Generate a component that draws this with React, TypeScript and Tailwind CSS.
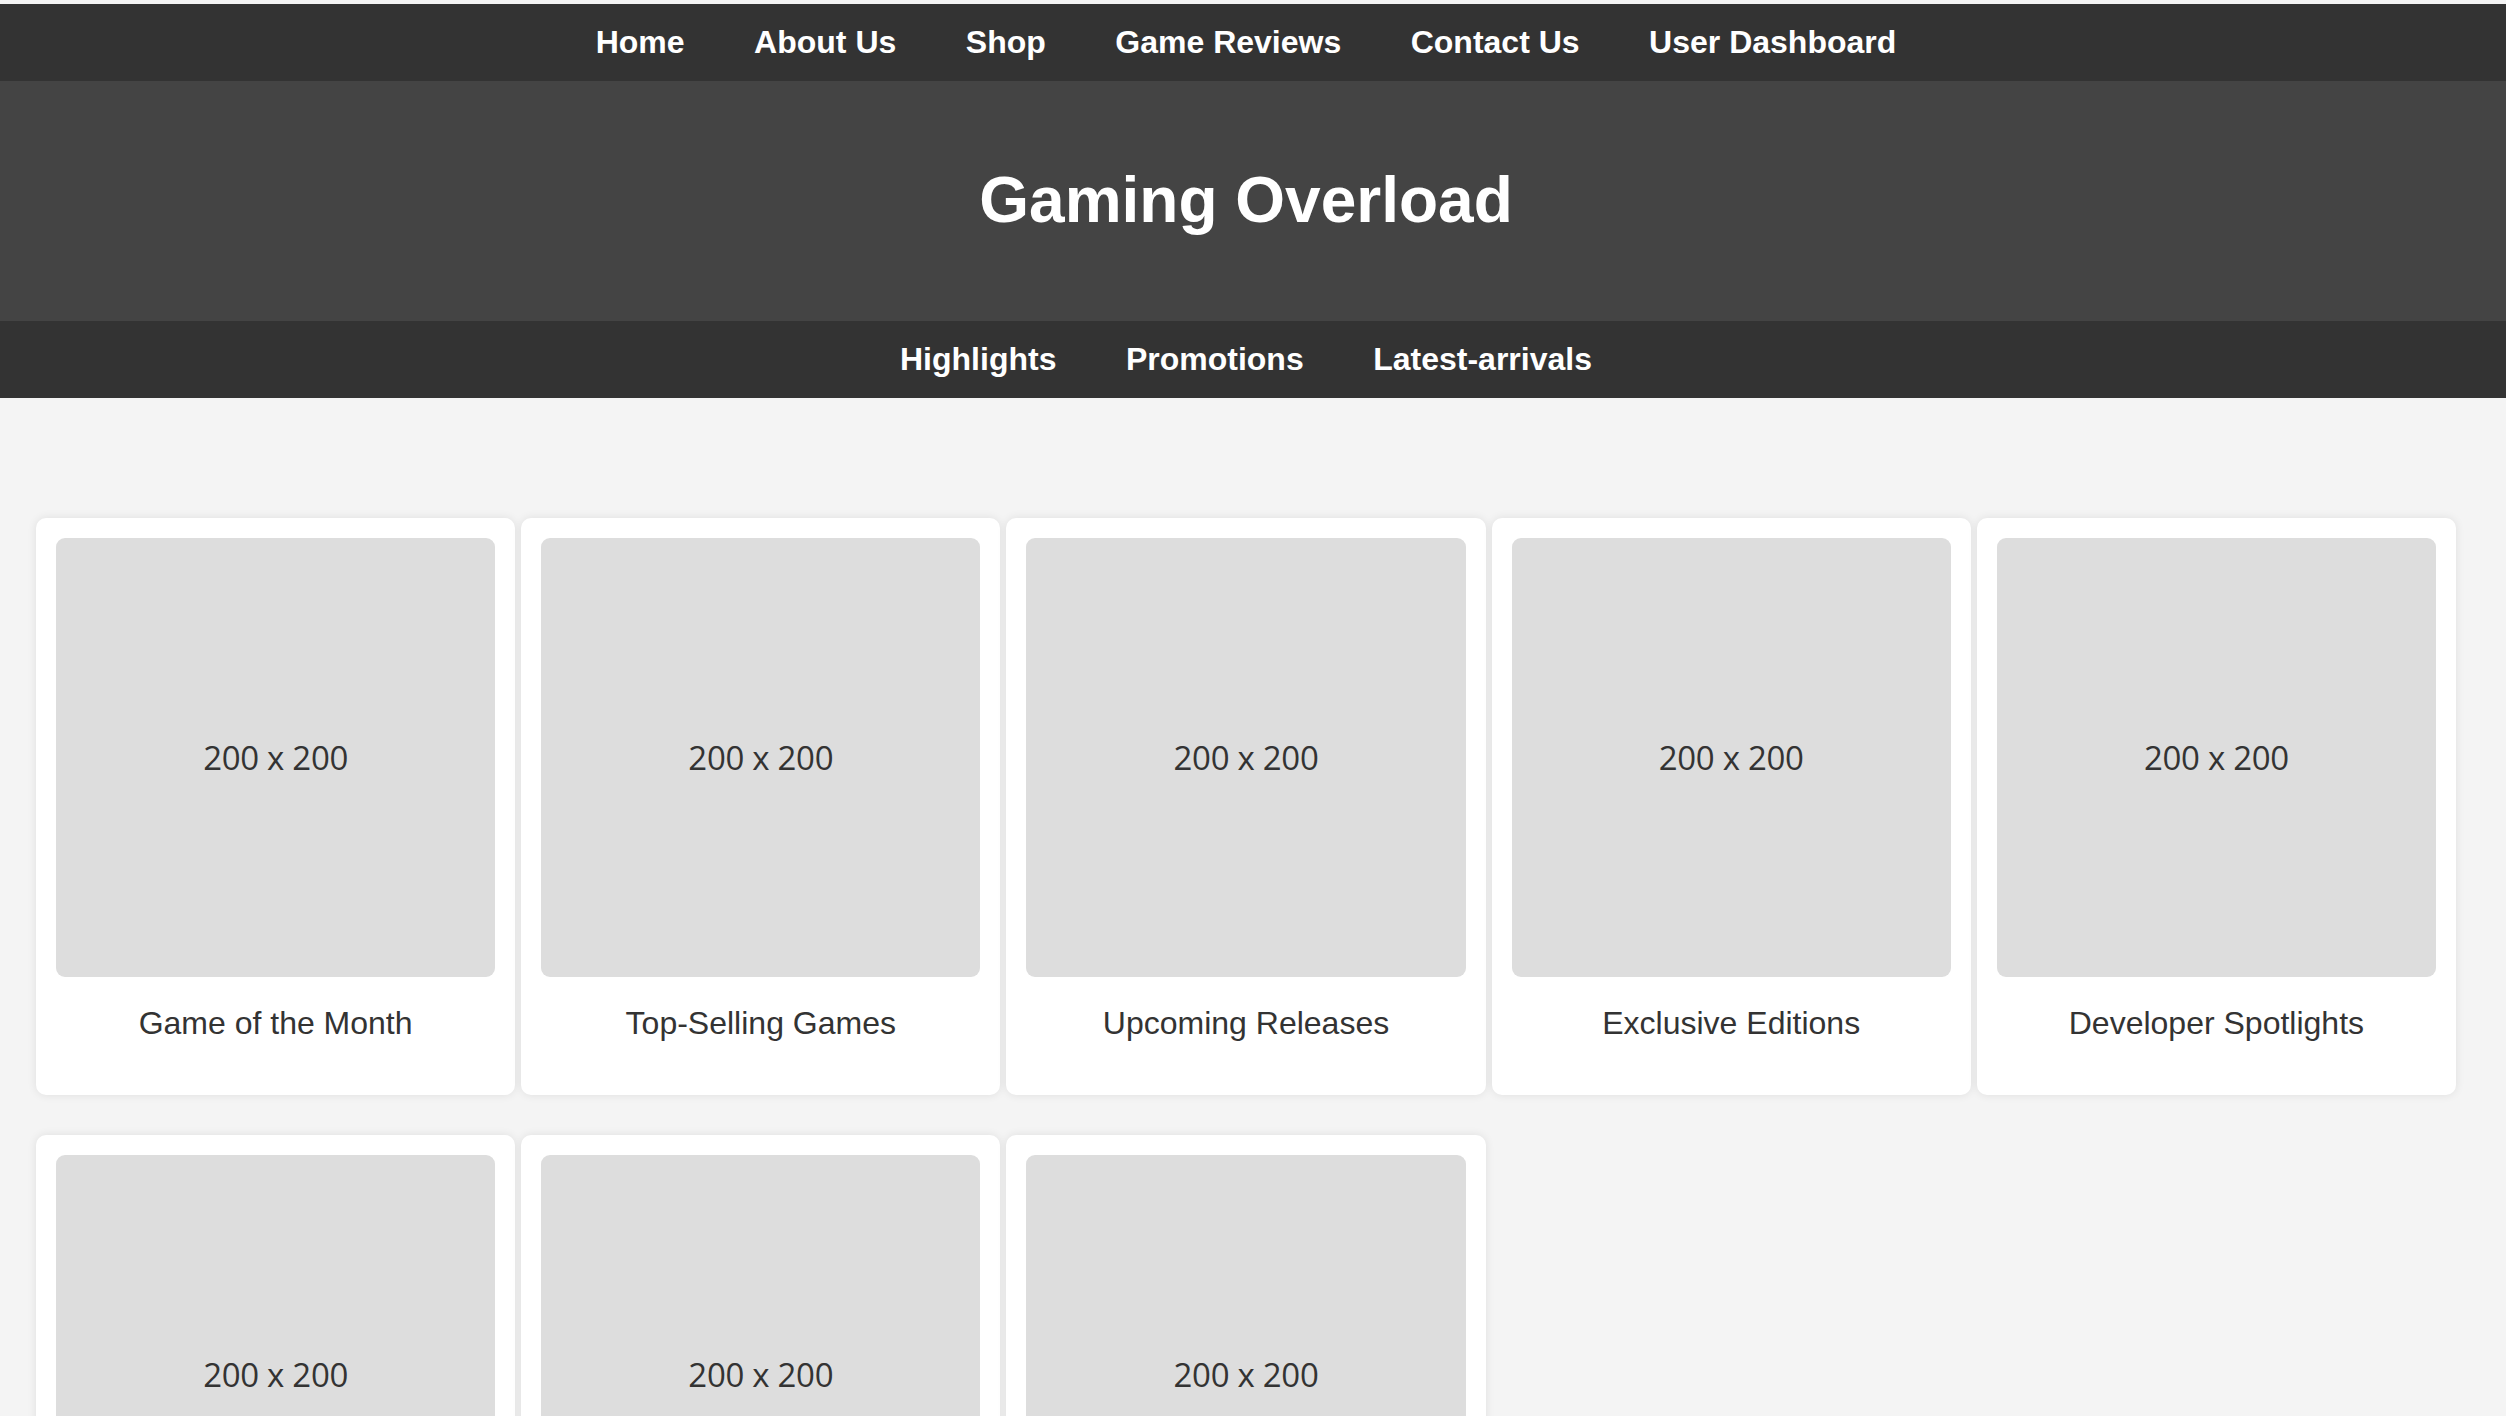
import React from "react";

const topLinks = ["Home", "About Us", "Shop", "Game Reviews", "Contact Us", "User Dashboard"];
const subLinks = ["Highlights", "Promotions", "Latest-arrivals"];
const cards = [
  "Game of the Month",
  "Top-Selling Games",
  "Upcoming Releases",
  "Exclusive Editions",
  "Developer Spotlights",
  "Indie Gems",
  "Retro Classics",
  "Esports Events",
];

function Card({ title }: { title: string }) {
  return (
    <div className="bg-white rounded-[10px] shadow-[0_0_10px_rgba(0,0,0,0.09)] p-[20px] pb-0 flex flex-col">
      <div className="w-full aspect-square bg-[#dddddd] rounded-[9px] flex items-center justify-center">
        <span
          className="text-[33px] text-[#333333] tracking-[-0.3px]"
          style={{ fontFamily: '"Open Sans", "DejaVu Sans", sans-serif' }}
        >
          200 x 200
        </span>
      </div>
      <p className="mt-[28px] mb-[53px] text-center text-[32px] leading-[36.8px] text-[#333333]">{title}</p>
    </div>
  );
}

export default function App() {
  return (
    <div
      className="min-h-[1416px] bg-[#f4f4f4] pt-[4px]"
      style={{ fontFamily: '"Liberation Sans", Arial, sans-serif' }}
    >
      <nav className="bg-[#333333] h-[77px] pr-[14px] flex items-center justify-center gap-x-[69.5px]">
        {topLinks.map((l) => (
          <a key={l} className="text-white font-bold text-[32px] leading-[36.8px]">
            {l}
          </a>
        ))}
      </nav>
      <header className="bg-[#444444] h-[240px] pr-[14px] flex items-center justify-center">
        <h1 className="text-white font-bold text-[64px] leading-[73.6px]">Gaming Overload</h1>
      </header>
      <nav className="bg-[#333333] h-[77px] pr-[14px] flex items-center justify-center gap-x-[69.5px]">
        {subLinks.map((l) => (
          <a key={l} className="text-white font-bold text-[32px] leading-[36.8px]">
            {l}
          </a>
        ))}
      </nav>
      <main className="pt-[120px] pl-[36px] pr-[50px] pb-[40px]">
        <div className="grid grid-cols-5 gap-x-[6px] gap-y-[40px]">
          {cards.map((c) => (
            <Card key={c} title={c} />
          ))}
        </div>
      </main>
    </div>
  );
}
